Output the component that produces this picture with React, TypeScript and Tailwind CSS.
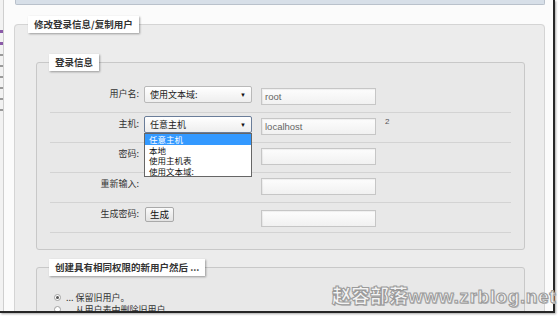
import React from "react";

const cjk = "font-['Noto_Sans_CJK_SC','Noto_Sans',sans-serif]";
const lat = "font-['Liberation_Sans','Noto_Sans_CJK_SC',sans-serif]";

function Select({ value, focused }: { value: string; focused?: boolean }) {
  return (
    <div
      className={`relative w-[108px] h-[17px] shrink-0 rounded-[2px] border ${
        focused ? "border-[#6a7d99]" : "border-[#b9b9b9]"
      } bg-gradient-to-b from-white to-[#eeeeee] flex items-center pl-[5px] pr-[5px]`}
    >
      <span className={`${cjk} text-[9px] leading-none text-[#222] flex-1`}>{value}</span>
      <span className="text-[6px] leading-none text-[#111]">▼</span>
      {focused && (
        <div className="absolute left-[-1px] top-[16px] w-[108px] border border-[#666] bg-white z-10 flex flex-col">
          <div className={`${cjk} text-[8.5px] leading-[10.5px] h-[10.5px] bg-[#3399ff] text-white pl-[4px]`}>任意主机</div>
          <div className={`${cjk} text-[8.5px] leading-[10.5px] h-[10.5px] text-[#111] pl-[4px]`}>本地</div>
          <div className={`${cjk} text-[8.5px] leading-[10.5px] h-[10.5px] text-[#111] pl-[4px]`}>使用主机表</div>
          <div className={`${cjk} text-[8.5px] leading-[10.5px] h-[10.5px] text-[#111] pl-[4px]`}>使用文本域:</div>
        </div>
      )}
    </div>
  );
}

function Input({ value }: { value?: string }) {
  return (
    <div className="w-[115px] h-[17px] shrink-0 border border-[#c6c6c6] bg-gradient-to-b from-[#fdfdfd] to-[#f1f1f1] shadow-[inset_1px_1px_1px_rgba(0,0,0,0.06)] flex items-center pl-[3px]">
      <span className={`${lat} text-[9.5px] leading-none text-[#666]`}>{value}</span>
    </div>
  );
}

function Row({ label, children }: { label: string; children: React.ReactNode }) {
  return (
    <div className="h-[30px] border-b border-[#d3d3d3] flex items-start pt-[3px]">
      <div className={`${cjk} w-[89px] shrink-0 text-right text-[9px] leading-[12px] text-[#333] mt-[2px]`}>{label}</div>
      <div className="ml-[5px] flex items-start">{children}</div>
    </div>
  );
}

function Legend({ text, ml }: { text: string; ml: string }) {
  return (
    <legend
      className={`${cjk} ${ml} h-[17px] px-[6px] bg-white shadow-[1px_1px_2px_rgba(0,0,0,0.35)] font-bold text-[9.5px] leading-[17px] text-[#333]`}
    >
      {text}
    </legend>
  );
}

export default function App() {
  return (
    <div className="w-[559px] h-[317px] bg-white overflow-hidden relative">
      <div className="w-[555px] h-[313px] border-r-2 border-b-2 border-[#262626] bg-[#fbfbfb] flex overflow-hidden shadow-[1px_1px_2px_rgba(0,0,0,0.35)]">
        <div className="w-[4px] shrink-0 bg-[#f2f2f2] border-r border-[#cfcfcf] flex flex-col gap-[9px] pt-[30px]">
          <div className="h-[3px] w-[3px] bg-[#8a5aa8]" />
          <div className="h-[3px] w-[3px] bg-[#8a5aa8]" />
          <div className="h-[2px] w-[3px] bg-[#9a9a9a]" />
          <div className="h-[2px] w-[3px] bg-[#9a9a9a]" />
          <div className="h-[2px] w-[3px] bg-[#9a9a9a]" />
          <div className="h-[2px] w-[3px] bg-[#9a9a9a]" />
          <div className="h-[2px] w-[3px] bg-[#9a9a9a]" />
          <div className="h-[2px] w-[3px] bg-[#9a9a9a]" />
        </div>
        <div className="flex-1 flex flex-col pl-[10px] pr-[8px]">
          <div className="h-[5px] ml-[1px] shrink-0 bg-[#d7dfe8] border-x border-b border-[#b9c1cb] rounded-b-[2px]" />
          <fieldset className="mt-[11px] border border-[#d4d4d4] rounded-t-[4px] bg-[#ececec] pl-[21px] pr-[19px] min-w-0">
            <Legend text="修改登录信息/复制用户" ml="-ml-[8px]" />
            <fieldset className="mt-[21px] border border-[#c8c8c8] rounded-[3px] bg-[#e8e8e8] px-[13px] pt-[12px] pb-[16px] min-w-0">
              <Legend text="登录信息" ml="-ml-[1px]" />
              <Row label="用户名:">
                <Select value="使用文本域:" />
                <div className="ml-[9px] mt-[2px]">
                  <Input value="root" />
                </div>
              </Row>
              <Row label="主机:">
                <Select value="任意主机" focused />
                <div className="ml-[9px] mt-[2px]">
                  <Input value="localhost" />
                </div>
                <span className={`${lat} ml-[9px] mt-[2px] text-[8px] leading-none text-[#555]`}>2</span>
              </Row>
              <Row label="密码:">
                <div className="w-[108px]" />
                <div className="ml-[9px] mt-[2px]">
                  <Input />
                </div>
              </Row>
              <Row label="重新输入:">
                <div className="w-[108px]" />
                <div className="ml-[9px] mt-[2px]">
                  <Input />
                </div>
              </Row>
              <Row label="生成密码:">
                <div className="w-[108px] flex">
                  <div className={`${cjk} w-[29px] h-[15px] mt-[1px] ml-[1px] border border-[#a9a9a9] rounded-[2px] bg-gradient-to-b from-[#fafafa] to-[#e2e2e2] text-[9.5px] leading-[13px] text-center text-[#111]`}>
                    生成
                  </div>
                </div>
                <div className="ml-[9px] mt-[4px]">
                  <Input />
                </div>
              </Row>
            </fieldset>
            <fieldset className="mt-[9px] border border-[#c8c8c8] rounded-[3px] bg-[#e8e8e8] px-[13px] pt-[15px] pb-[10px] min-w-0">
              <Legend text="创建具有相同权限的新用户然后 ..." ml="-ml-[1px]" />
              <div className="flex items-center h-[12px] pl-[4px]">
                <div className="w-[7px] h-[7px] rounded-full border border-[#a0a0a0] bg-white flex items-center justify-center">
                  <div className="w-[3px] h-[3px] rounded-full bg-[#555]" />
                </div>
                <span className={`${cjk} ml-[5px] text-[9px] leading-none text-[#333]`}>... 保留旧用户。</span>
              </div>
              <div className="flex items-center h-[12px] pl-[4px]">
                <div className="w-[7px] h-[7px] rounded-full border border-[#a0a0a0] bg-white" />
                <span className={`${cjk} ml-[5px] text-[9px] leading-none text-[#333]`}>... 从用户表中删除旧用户。</span>
              </div>
            </fieldset>
            <div className="h-[40px]" />
          </fieldset>
        </div>
      </div>
      <div className="absolute left-[332px] top-[285px] font-['Noto_Sans_CJK_SC',sans-serif] font-black text-[19px] leading-none text-[#f4f4f4] [-webkit-text-stroke:1px_#9a9a9a] whitespace-nowrap [text-shadow:1px_1px_0_#bbb]">
        赵容部落<span className="font-['Liberation_Sans',sans-serif] font-bold text-[19px] tracking-[0.6px]">www.zrblog.net</span>
      </div>
    </div>
  );
}
